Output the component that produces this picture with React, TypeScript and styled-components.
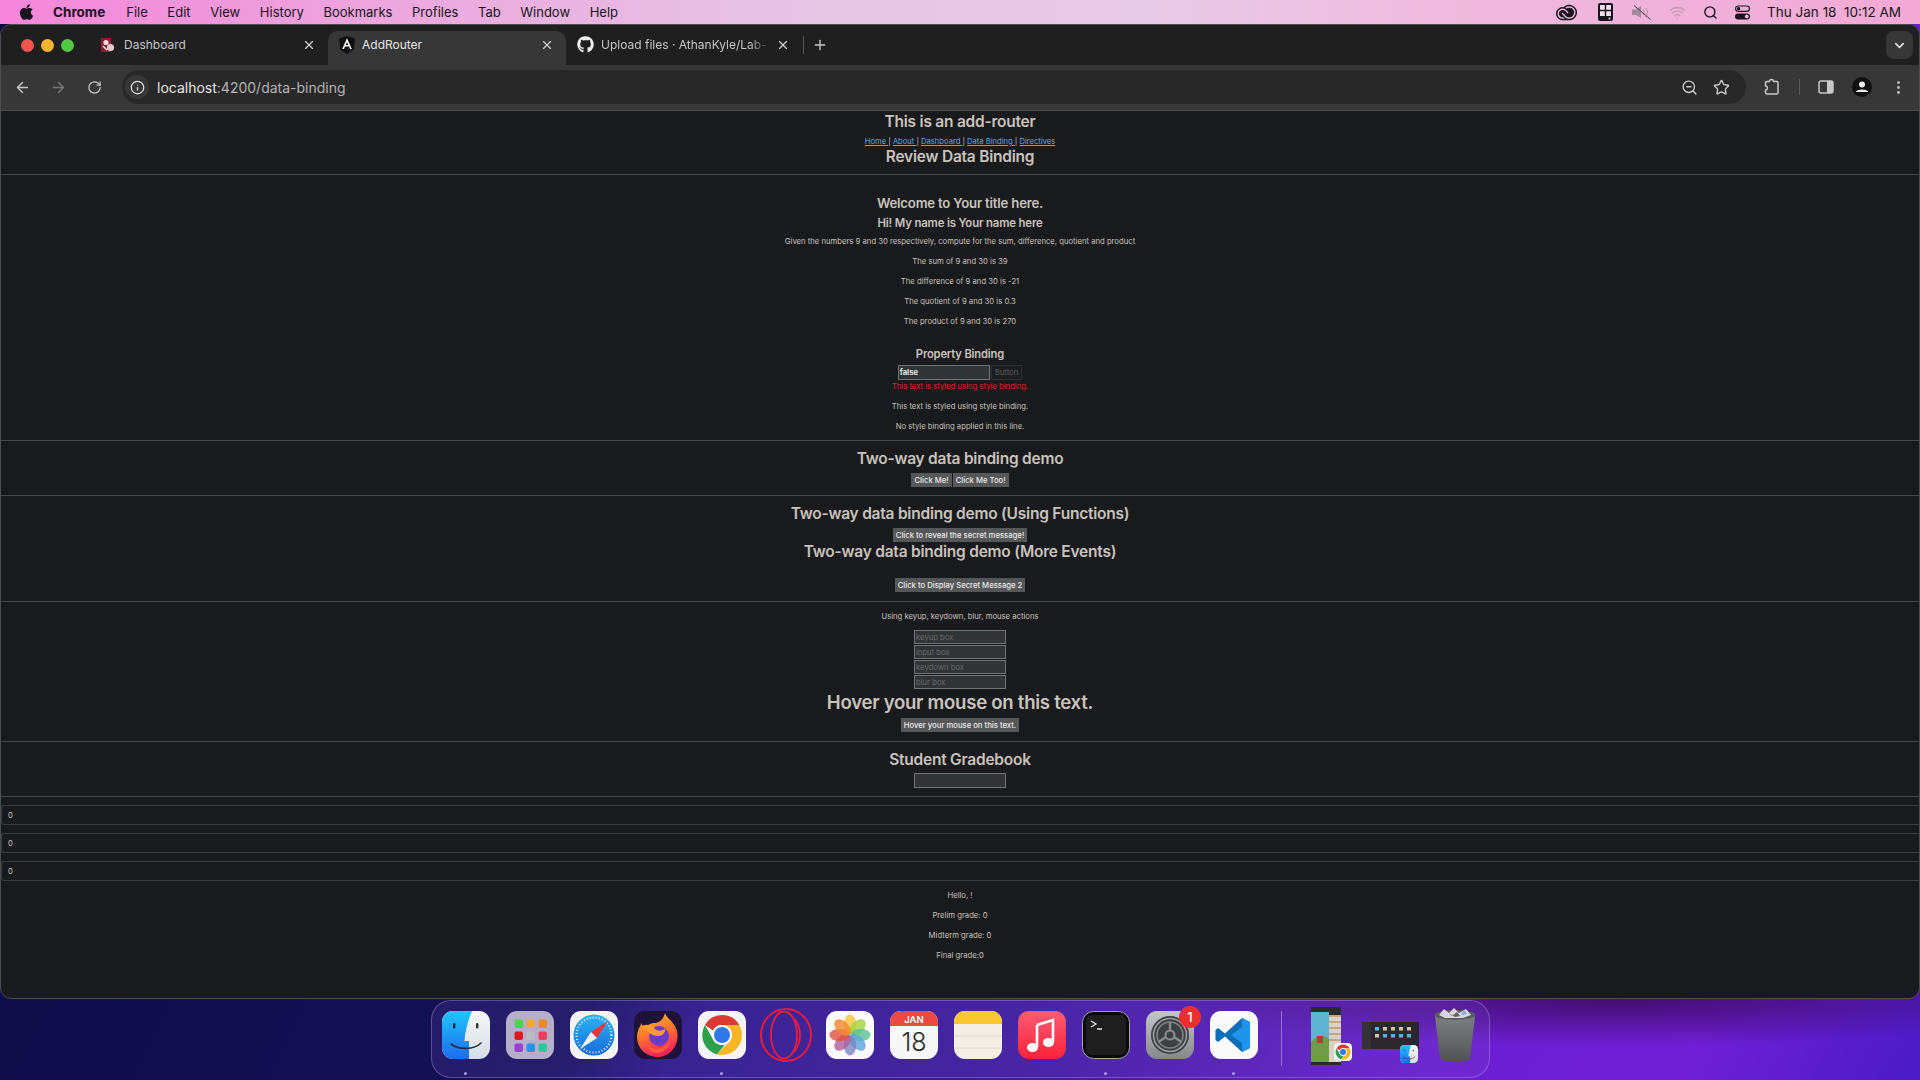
import React from 'react';
import styled, { createGlobalStyle } from 'styled-components';
import { ArrowLeft, ArrowRight, ChevronDown, Info, MoreVertical, Plus, RotateCw, Search, Star, Wifi, X, ZoomOut } from 'lucide-react';
import { FaApple, FaGithub } from 'react-icons/fa';
import { SiAdobecreativecloud } from 'react-icons/si';

const GlobalStyle = createGlobalStyle`
  html, body {
    margin: 0;
    padding: 0;
    background: #100f4a;
  }
  * {
    box-sizing: border-box;
  }
`;

const MENU_ITEMS = ['File', 'Edit', 'View', 'History', 'Bookmarks', 'Profiles', 'Tab', 'Window', 'Help'];

const Desktop = styled.div`
  width: 1920px;
  height: 1080px;
  overflow: hidden;
  display: flex;
  flex-direction: column;
  font-family: Inter, 'Liberation Sans', sans-serif;
  background:
    radial-gradient(ellipse 460px 46px at 1620px 1000px, rgba(62, 12, 100, 0.9), transparent),
    linear-gradient(118deg, #0b0c3e 0%, #141058 45%, #2a1886 49.5%, #3a1a9a 62%, #4f1cb0 70%, #6a1fd0 80%, #701fd6 90%, #4a1cc8 100%);
`;

const MenuBar = styled.div`
  height: 24px;
  flex: none;
  display: flex;
  align-items: center;
  padding: 0 19px 0 18px;
  color: #1a1420;
  font-size: 13px;
  background: linear-gradient(90deg, #f585d9 0%, #ee9fdc 15%, #e6c3e4 40%, #e8cbe6 60%, #efbadd 75%, #f3a9d4 100%);
`;

const AppleMark = styled(FaApple)`
  width: 17px;
  height: 18px;
  margin-right: 18px;
`;

const MenuApp = styled.span`
  font-size: 13.5px;
  font-weight: 700;
  margin-right: 21px;
`;

const MenuItem = styled.span`
  margin-right: 19.6px;
`;

const StatusArea = styled.div`
  margin-left: auto;
  display: flex;
  align-items: center;
`;

const StatusSlot = styled.div<{ $width: number }>`
  width: ${({ $width }) => $width}px;
  display: flex;
  justify-content: center;
  align-items: center;
`;

const Clock = styled.span`
  margin-left: 9px;
  font-size: 13.5px;
  white-space: pre;
`;

const Window = styled.div`
  height: 975px;
  flex: none;
  display: flex;
  flex-direction: column;
  border: 1px solid #4b4d4e;
  border-radius: 11px;
  overflow: hidden;
  background: #181a1b;
`;

const TabStrip = styled.div`
  height: 40px;
  flex: none;
  display: flex;
  align-items: flex-end;
  background: #1f1f1f;
`;

const TrafficLights = styled.div`
  width: 89px;
  height: 40px;
  flex: none;
  padding-left: 20px;
  display: flex;
  align-items: center;
  gap: 7px;
`;

const Light = styled.span<{ $color: string }>`
  width: 13px;
  height: 13px;
  border-radius: 50%;
  background: ${({ $color }) => $color};
`;

const Tab = styled.div<{ $active?: boolean; $width: number }>`
  width: ${({ $width }) => $width}px;
  height: 34px;
  flex: none;
  display: flex;
  align-items: center;
  gap: 7px;
  padding: 0 12px 7px 11px;
  font-size: 12px;
  color: ${({ $active }) => ($active ? '#e6e6e6' : '#c4c4c4')};
  border-radius: 10px 10px 0 0;
  background: ${({ $active }) => ($active ? '#373737' : 'transparent')};
`;

const TabTitle = styled.span<{ $fade?: boolean }>`
  flex: 1;
  overflow: hidden;
  white-space: nowrap;
  ${({ $fade }) =>
    $fade && 'mask-image: linear-gradient(90deg, #000 88%, transparent 100%);'}
`;

const TabClose = styled(X)`
  width: 14px;
  height: 14px;
  flex: none;
  color: #d0d0d0;
`;

const TabDivider = styled.div`
  width: 1px;
  height: 18px;
  margin: 0 0 11px 1px;
  background: #555;
`;

const NewTab = styled(Plus)`
  width: 16px;
  height: 16px;
  margin: 0 0 12px 8px;
  color: #c9c9c9;
`;

const TabSearch = styled.div`
  width: 27px;
  height: 28px;
  margin: 0 6px 6px auto;
  border-radius: 8px;
  display: flex;
  align-items: center;
  justify-content: center;
  color: #e3e3e3;
  background: #373737;
`;

const Toolbar = styled.div`
  height: 46px;
  flex: none;
  display: flex;
  align-items: center;
  padding: 0 12px 1px 3px;
  background: #373737;
  border-bottom: 1px solid #4a4a4a;
`;

const NavButton = styled.div<{ $dim?: boolean }>`
  width: 36px;
  display: flex;
  justify-content: center;
  color: ${({ $dim }) => ($dim ? '#777' : '#c7c7c7')};
`;

const Omnibox = styled.div`
  width: 1624px;
  height: 34px;
  margin-left: 10px;
  display: flex;
  align-items: center;
  padding: 0 16px 0 3px;
  border-radius: 17px;
  background: #282828;
`;

const SiteInfo = styled.div`
  width: 24px;
  height: 24px;
  border-radius: 50%;
  display: flex;
  align-items: center;
  justify-content: center;
  color: #e3e3e3;
  background: #373737;
`;

const Address = styled.span`
  margin-left: 8px;
  font-size: 14px;
  color: #e6e6e6;
`;

const AddressRest = styled.span`
  color: #b4b4b4;
`;

const OmniboxActions = styled.div`
  margin-left: auto;
  display: flex;
  align-items: center;
  gap: 15px;
  color: #c7c7c7;
`;

const ToolbarActions = styled.div`
  margin-left: 17px;
  flex: 1;
  display: flex;
  align-items: center;
  justify-content: space-between;
  color: #c7c7c7;
`;

const ToolbarDivider = styled.div`
  width: 1px;
  height: 16px;
  background: #5a5a5a;
`;

const Content = styled.main`
  flex: 1;
  display: flex;
  flex-direction: column;
  align-items: center;
  color: #c8c3bc;
  font-family: Inter, 'Liberation Sans', sans-serif;
`;

const Heading = styled.h1<{ $size: number; $height: number; $top?: number }>`
  margin: ${({ $top }) => $top ?? 0}px 0 0;
  font-size: ${({ $size }) => $size}px;
  line-height: ${({ $height }) => $height}px;
  font-weight: 600;
  letter-spacing: -0.015em;
  white-space: nowrap;
`;

const NavLinks = styled.nav`
  margin-top: 4px;
  font-size: 7.6px;
  line-height: 12px;
`;

const NavLink = styled.a`
  color: #5fa9ee;
  text-decoration: underline;
`;

const Paragraph = styled.p<{ $top?: number; $red?: boolean }>`
  margin: ${({ $top }) => $top ?? 8}px 0 0;
  padding-top: 2px;
  font-size: 7.7px;
  line-height: 10px;
  white-space: nowrap;
  color: ${({ $red }) => ($red ? '#f0142a' : 'inherit')};
`;

const Rule = styled.hr<{ $top?: number }>`
  width: 100%;
  height: 1px;
  flex: none;
  margin: ${({ $top }) => $top ?? 8}px 0 0;
  border: 0;
  background: #43484a;
`;

const FieldRow = styled.div<{ $top?: number }>`
  margin-top: ${({ $top }) => $top ?? 0}px;
  display: flex;
`;

const FieldStack = styled.div<{ $top?: number }>`
  margin-top: ${({ $top }) => $top ?? 0}px;
  display: flex;
  flex-direction: column;
  gap: 1px;
`;

const TextField = styled.div<{ $bold?: boolean; $height?: number }>`
  width: 92px;
  height: ${({ $height }) => $height ?? 14}px;
  display: flex;
  align-items: center;
  padding-left: 1px;
  font-size: 7.7px;
  font-weight: ${({ $bold }) => ($bold ? 700 : 400)};
  color: ${({ $bold }) => ($bold ? '#e8e6e3' : '#6a6a6a')};
  background: #303436;
  border: 1px solid #6f7679;
`;

const GhostButton = styled.div`
  height: 15px;
  padding: 0 3px;
  margin-left: 1px;
  display: flex;
  align-items: center;
  font-size: 7.7px;
  color: #5c5c5c;
  background: #1c1d1e;
  border: 1px solid #2f3132;
`;

const ActionRow = styled.div<{ $top?: number }>`
  margin-top: ${({ $top }) => $top ?? 0}px;
  display: flex;
  gap: 1px;
`;

const ActionButton = styled.div`
  height: 14px;
  padding: 0 3px;
  display: flex;
  align-items: center;
  font-size: 7.7px;
  font-weight: 500;
  white-space: nowrap;
  color: #eeecea;
  background: #555759;
`;

const GradeRow = styled.div<{ $top?: number }>`
  width: 100%;
  height: 20px;
  flex: none;
  margin-top: ${({ $top }) => $top ?? 8}px;
  display: flex;
  align-items: center;
  padding-left: 6px;
  font-size: 7.7px;
  border: 1px solid #383c3e;
  border-right: 0;
  border-radius: 3px 0 0 3px;
`;

const Dock = styled.div`
  width: 1059px;
  height: 78px;
  flex: none;
  margin: 1px 0 0 431px;
  padding: 10px 0 0 10px;
  display: flex;
  align-items: flex-start;
  border: 1px solid rgba(190, 170, 240, 0.35);
  border-radius: 20px;
  background: rgba(120, 90, 200, 0.18);
`;

const DockSlot = styled.div<{ $dot?: boolean }>`
  position: relative;
  width: 48px;
  height: 48px;
  flex: none;
  margin-right: 16px;

  ${({ $dot }) =>
    $dot &&
    `&::after {
      content: '';
      position: absolute;
      left: 22px;
      top: 61px;
      width: 3px;
      height: 3px;
      border-radius: 50%;
      background: #a99cf0;
    }`}
`;

const DockBadge = styled.span`
  position: absolute;
  top: -5px;
  right: -7px;
  width: 22px;
  height: 22px;
  border-radius: 50%;
  display: flex;
  align-items: center;
  justify-content: center;
  color: #fff;
  font-size: 13px;
  font-weight: 500;
  background: #ee2f2f;
`;

const DockDivider = styled.div`
  width: 1px;
  height: 55px;
  flex: none;
  margin: 0 29px 0 7px;
  background: rgba(210, 190, 245, 0.5);
`;

const Recent = styled.div<{ $width: number; $height: number; $gap: number; $top: number }>`
  position: relative;
  width: ${({ $width }) => $width}px;
  height: ${({ $height }) => $height}px;
  margin-top: ${({ $top }) => $top}px;
  margin-right: ${({ $gap }) => $gap}px;
  flex: none;
`;

const RecentBadge = styled.div<{ $right: number; $bottom: number }>`
  position: absolute;
  right: ${({ $right }) => $right}px;
  bottom: ${({ $bottom }) => $bottom}px;
  width: 18px;
  height: 18px;
`;

const TrashSlot = styled.div`
  margin-top: -4px;
  flex: none;
`;

const OperaMark = styled.svg`
  width: 52px;
  height: 54px;
  margin: -3px -2px;
`;

const FinderIcon = () => (
  <svg viewBox="0 0 48 48" width="100%" height="100%">
    <defs>
      <linearGradient id="finderBlue" x1="0" y1="0" x2="0" y2="1">
        <stop offset="0" stopColor="#1fc6fb" />
        <stop offset="1" stopColor="#1c6cf0" />
      </linearGradient>
      <linearGradient id="finderLight" x1="0" y1="0" x2="0" y2="1">
        <stop offset="0" stopColor="#f7f7f7" />
        <stop offset="1" stopColor="#d4dde6" />
      </linearGradient>
    </defs>
    <rect width="48" height="48" rx="11" fill="url(#finderLight)" />
    <path d="M11 0H30C26 10 23 20 22.5 30H27V48H11A11 11 0 0 1 0 37V11A11 11 0 0 1 11 0Z" fill="url(#finderBlue)" />
    <rect x="11" y="12" width="2.4" height="5.5" rx="1.2" fill="#1a2a44" />
    <rect x="34" y="12" width="2.4" height="5.5" rx="1.2" fill="#333" />
    <path d="M9 33C17 39 32 39 39 32" stroke="#26303c" strokeWidth="1.6" fill="none" strokeLinecap="round" />
  </svg>
);

const LaunchpadIcon = () => {
  const colors = ['#4ed34a', '#f2aa32', '#f08a24', '#e1191f', '#b9bcc4', '#ef3b5c', '#9a3fd0', '#2393ef', '#2ac9a0'];
  return (
    <svg viewBox="0 0 48 48" width="100%" height="100%">
      <rect width="48" height="48" rx="11" fill="#b5afc9" />
      {colors.map((color, i) => (
        <rect key={color} x={8.5 + (i % 3) * 12} y={8.5 + Math.floor(i / 3) * 12} width="8.5" height="8.5" rx="2" fill={color} />
      ))}
    </svg>
  );
};

const SafariIcon = () => (
  <svg viewBox="0 0 48 48" width="100%" height="100%">
    <defs>
      <linearGradient id="safariBlue" x1="0" y1="0" x2="0" y2="1">
        <stop offset="0" stopColor="#29b5f5" />
        <stop offset="1" stopColor="#1a6ad8" />
      </linearGradient>
    </defs>
    <rect width="48" height="48" rx="11" fill="#f4f4f4" />
    <circle cx="24" cy="24" r="20.5" fill="url(#safariBlue)" />
    <circle cx="24" cy="24" r="17.5" fill="none" stroke="#fff" strokeWidth="2.2" strokeDasharray="1 2.1" opacity="0.85" />
    <path d="M38 10L21 21L27 27Z" fill="#f0343c" />
    <path d="M10 38L21 21L27 27Z" fill="#f2f2f2" />
  </svg>
);

const FirefoxIcon = () => (
  <svg viewBox="0 0 48 48" width="100%" height="100%">
    <defs>
      <linearGradient id="foxFlame" x1="0" y1="0" x2="0.3" y2="1">
        <stop offset="0" stopColor="#ffc02e" />
        <stop offset="0.5" stopColor="#ff7a28" />
        <stop offset="1" stopColor="#f0245a" />
      </linearGradient>
    </defs>
    <rect width="48" height="48" rx="11" fill="#1f1238" />
    <path d="M31 2C33 8 40 10 43 20C46 34 36 46 24 46C12 46 3 37 3 26C3 21 5 16 8 12C8 16 9 17 11 18C13 14 17 12 20 12C24 12 29 10 31 2Z" fill="url(#foxFlame)" />
    <circle cx="25" cy="25" r="10" fill="#6a3bc8" />
    <path d="M6 16C12 12 18 14 21 18C24 21 30 20 31 17C32 22 28 25 24 25C18 25 15 21 6 16Z" fill="#ff9a2e" />
    <path d="M13 33C20 42 34 38 36 27C37 38 27 43 21 42C17 41 14 37 13 33Z" fill="#ff5a3c" />
  </svg>
);

const ChromeIcon = () => (
  <svg viewBox="0 0 48 48" width="100%" height="100%">
    <rect width="48" height="48" rx="11" fill="#f4f4f6" />
    <path d="M24 4A20 20 0 0 1 41.3 14H24A10 10 0 0 0 15 19.6L7 14A20 20 0 0 1 24 4Z" fill="#db3a30" />
    <path d="M7 14L15.3 29A10 10 0 0 0 27 33.5L19 43.4A20 20 0 0 1 7 14Z" fill="#2da14a" />
    <path d="M41.3 14A20 20 0 0 1 24 44L19 43.4L32.6 29A10 10 0 0 0 24 14Z" fill="#f9b526" />
    <circle cx="24" cy="24" r="10" fill="#fff" />
    <circle cx="24" cy="24" r="8" fill="#2f78e6" />
  </svg>
);

const OperaIcon = () => (
  <OperaMark viewBox="0 0 52 54">
    <ellipse cx="26" cy="27" rx="25" ry="26" fill="none" stroke="#ee1c3a" strokeWidth="2" />
    <ellipse cx="24" cy="27" rx="13" ry="23.5" fill="none" stroke="#ee1c3a" strokeWidth="1.8" />
    <path d="M34 10C42 20 42 34 34 44" fill="none" stroke="#ee1c3a" strokeWidth="1.8" />
  </OperaMark>
);

const PhotosIcon = () => {
  const petals = ['#f6c63a', '#a6d23e', '#5fc08e', '#5aa8dc', '#7f83c6', '#b25f9e', '#e2503e', '#f08a2e'];
  return (
    <svg viewBox="0 0 48 48" width="100%" height="100%">
      <rect width="48" height="48" rx="11" fill="#fafafa" />
      {petals.map((color, i) => (
        <ellipse key={color} cx="24" cy="13.5" rx="6.2" ry="10" fill={color} opacity="0.8" transform={`rotate(${i * 45} 24 24)`} />
      ))}
    </svg>
  );
};

const CalendarIcon = () => (
  <svg viewBox="0 0 48 48" width="100%" height="100%">
    <rect width="48" height="48" rx="11" fill="#f7f7f7" />
    <path d="M11 0H37A11 11 0 0 1 48 11V15H0V11A11 11 0 0 1 11 0Z" fill="#ea4a42" />
    <text x="24" y="11.5" textAnchor="middle" fontFamily="Inter" fontWeight="600" fontSize="9.5" fill="#fff">JAN</text>
    <text x="24" y="40" textAnchor="middle" fontFamily="Inter" fontWeight="300" fontSize="25" fill="#2b2b2b">18</text>
  </svg>
);

const NotesIcon = () => (
  <svg viewBox="0 0 48 48" width="100%" height="100%">
    <rect width="48" height="48" rx="11" fill="#f3efe5" />
    <path d="M11 0H37A11 11 0 0 1 48 11V13H0V11A11 11 0 0 1 11 0Z" fill="#fbc833" />
    <path d="M0 25H48M0 37H48" stroke="#d9d5cb" strokeWidth="0.8" />
  </svg>
);

const MusicIcon = () => (
  <svg viewBox="0 0 48 48" width="100%" height="100%">
    <defs>
      <linearGradient id="musicRed" x1="0" y1="0" x2="0" y2="1">
        <stop offset="0" stopColor="#fb5c74" />
        <stop offset="1" stopColor="#fa233b" />
      </linearGradient>
    </defs>
    <rect width="48" height="48" rx="11" fill="url(#musicRed)" />
    <path d="M19 14L35 9V31" stroke="#fff" strokeWidth="2.6" fill="none" />
    <path d="M19 14V36" stroke="#fff" strokeWidth="2.6" fill="none" />
    <ellipse cx="14.5" cy="36.5" rx="5.5" ry="4.5" fill="#fff" />
    <ellipse cx="30.5" cy="31.5" rx="5.5" ry="4.5" fill="#fff" />
  </svg>
);

const TerminalIcon = () => (
  <svg viewBox="0 0 48 48" width="100%" height="100%">
    <rect x="0.5" y="0.5" width="47" height="47" rx="11" fill="#0a0a0a" stroke="#a3a3a8" />
    <rect x="4" y="4" width="40" height="40" rx="6" fill="#1e1e1e" />
    <path d="M9 10L14 13L9 16M15 18H20" stroke="#e8e8e8" strokeWidth="1.3" fill="none" />
  </svg>
);

const SettingsIcon = () => (
  <svg viewBox="0 0 48 48" width="100%" height="100%">
    <defs>
      <linearGradient id="gearBack" x1="0" y1="0" x2="0" y2="1">
        <stop offset="0" stopColor="#c3c6cb" />
        <stop offset="1" stopColor="#85878b" />
      </linearGradient>
    </defs>
    <rect width="48" height="48" rx="11" fill="url(#gearBack)" />
    <circle cx="24" cy="24" r="19" fill="#3e3f42" />
    <circle cx="24" cy="24" r="16.5" fill="none" stroke="#9a9c9f" strokeWidth="1.6" />
    <circle cx="24" cy="24" r="13" fill="none" stroke="#808285" strokeWidth="1.6" />
    <circle cx="24" cy="24" r="4.5" fill="none" stroke="#8a8c8f" strokeWidth="2" />
    <path d="M24 19.5V11M20 26L12.5 31M28 26L35.5 31" stroke="#8a8c8f" strokeWidth="2.4" />
  </svg>
);

const VSCodeIcon = () => (
  <svg viewBox="0 0 48 48" width="100%" height="100%">
    <rect width="48" height="48" rx="11" fill="#fafafa" />
    <path d="M32 7L40 11V37L32 41L15 25.5L8 31L5.5 29V19L8 17L15 22.5Z" fill="#0a6fb8" />
    <path d="M32 7L40 11V37L32 41V32L21 24L32 16Z" fill="#1f94e8" />
  </svg>
);

const TrashIcon = () => (
  <svg viewBox="0 0 44 56" width="44" height="56">
    <defs>
      <linearGradient id="binGrey" x1="0" y1="0" x2="0" y2="1">
        <stop offset="0" stopColor="#7d7f82" />
        <stop offset="1" stopColor="#505255" />
      </linearGradient>
    </defs>
    <path d="M2 9L7 52C8 55 36 55 37 52L42 9Z" fill="url(#binGrey)" />
    <ellipse cx="22" cy="8" rx="20.5" ry="5" fill="#5a5c60" />
    <path d="M6 8L11 2L16 6L21 1L26 6L33 2L38 8L30 11H12Z" fill="#d8d6d8" />
    <path d="M16 6L19 9L24 5L27 9L22 10Z" fill="#65615f" />
    <path d="M31 3L34 7L28 8Z" fill="#7bb0c8" />
  </svg>
);

const ChromeThumb = () => (
  <svg viewBox="0 0 30 58" width="30" height="58">
    <rect width="30" height="58" fill="#2c2a2a" />
    <rect y="5" width="18" height="50" fill="#5eb4d3" />
    <path d="M0 36C6 26 12 28 18 32V55H0Z" fill="#6f9c46" />
    <path d="M6 29H12V36H6Z" fill="#b0402e" />
    <rect x="18" y="8" width="12" height="47" fill="#d9d2c4" />
    <path d="M18 9H30M18 15H30M18 21H30M18 27H30M18 33H30" stroke="#b27a45" strokeWidth="1" />
  </svg>
);

const FinderThumb = () => {
  const tiles = [
    [13, 5, '#4fb5ea'], [21, 5, '#d6c3ae'], [29, 5, '#d6c3ae'], [37, 5, '#d6c3ae'], [45, 5, '#d6c3ae'],
    [13, 12, '#d6c3ae'], [21, 12, '#4fb5ea'], [29, 12, '#4fb5ea'], [37, 12, '#4fb5ea'], [45, 12, '#4fb5ea'],
  ] as const;
  return (
    <svg viewBox="0 0 57 27" width="57" height="27">
      <rect width="57" height="27" fill="#2a282c" />
      <rect width="9" height="27" fill="#343236" />
      {tiles.map(([x, y, color]) => (
        <rect key={`${x}-${y}`} x={x} y={y} width="4" height="3.5" fill={color} />
      ))}
    </svg>
  );
};

const ExtensionIcon = () => (
  <svg width="18" height="18" viewBox="0 0 18 18" fill="none" stroke="#c7c7c7" strokeWidth="1.5" strokeLinejoin="round">
    <path d="M3.5 3.5H6.5C6.5 0.8 10.5 0.8 10.5 3.5H14A1 1 0 0 1 15 4.5V14.5A1.5 1.5 0 0 1 13.5 16H4A1.5 1.5 0 0 1 2.5 14.5V12C5 12 5 8 2.5 8V4.5A1 1 0 0 1 3.5 3.5Z" />
  </svg>
);

const SidePanelIcon = () => (
  <svg width="16" height="16" viewBox="0 0 16 16">
    <rect x="1" y="2" width="14" height="12" rx="2" fill="none" stroke="#c7c7c7" strokeWidth="1.5" />
    <path d="M9 2H13A2 2 0 0 1 15 4V12A2 2 0 0 1 13 14H9Z" fill="#c7c7c7" />
  </svg>
);

const AvatarIcon = () => (
  <svg width="20" height="20" viewBox="0 0 20 20">
    <circle cx="10" cy="10" r="10" fill="#111" />
    <circle cx="10" cy="7.6" r="3" fill="#eee" />
    <path d="M4 14.5C5 11.8 15 11.8 16 14.5V15H4Z" fill="#eee" />
  </svg>
);

const AngularFavicon = () => (
  <svg width="16" height="18" viewBox="0 0 16 18" style={{ flex: 'none' }}>
    <path d="M8 0L16 2.8L14.8 13.6L8 18L1.2 13.6L0 2.8Z" fill="#0f0f12" />
    <path d="M8 2.2L3.2 13H5L6 10.6H10L11 13H12.8ZM6.8 9L8 6L9.2 9Z" fill="#fff" />
  </svg>
);

const DashboardFavicon = () => (
  <svg width="14" height="14" viewBox="0 0 14 14" style={{ flex: 'none', marginRight: 2 }}>
    <rect width="10" height="14" fill="#8f1a33" />
    <circle cx="5" cy="4.5" r="2.6" fill="#f2dfe2" />
    <circle cx="9.5" cy="9.5" r="3.6" fill="#e8c9cf" />
    <path d="M2 8L6 12" stroke="#f2dfe2" strokeWidth="1.6" />
  </svg>
);

const GridBoxIcon = () => (
  <svg width="15" height="18" viewBox="0 0 15 18">
    <rect width="15" height="18" rx="2" fill="#1a1420" />
    <rect x="2" y="2" width="11" height="11" fill="#f0e0ec" />
    <path d="M7.5 2V13M2 7.5H13" stroke="#1a1420" strokeWidth="1.4" />
    <circle cx="11.5" cy="15.5" r="1" fill="#f0e0ec" />
  </svg>
);

const MutedSpeakerIcon = () => (
  <svg width="19" height="15" viewBox="0 0 19 15">
    <path d="M0 4.5H4L9 1V13L4 10H0Z" fill="#a48a9e" />
    <path d="M11 4.5C12.5 6 12.5 8.5 11 10M13.5 3C16 5.5 16 9 13.5 12" fill="none" stroke="#a48a9e" strokeWidth="1" />
    <path d="M2 0.5L18.5 14.5" stroke="#4f3f4d" strokeWidth="1" />
  </svg>
);

const ControlCenterIcon = () => (
  <svg width="15" height="15" viewBox="0 0 15 15">
    <rect x="0.6" y="1" width="13.8" height="5.4" rx="2.7" fill="none" stroke="#1a1420" strokeWidth="1.1" />
    <circle cx="3.6" cy="3.7" r="1.7" fill="#1a1420" />
    <rect y="8.4" width="15" height="6" rx="3" fill="#1a1420" />
    <circle cx="11.8" cy="11.4" r="1.9" fill="#f0b5d8" />
  </svg>
);

const App: React.FC = () => {
  return (
    <Desktop>
      <GlobalStyle />
      <MenuBar>
        <AppleMark />
        <MenuApp>Chrome</MenuApp>
        {MENU_ITEMS.map((item) => (
          <MenuItem key={item}>{item}</MenuItem>
        ))}
        <StatusArea>
          <StatusSlot $width={44}>
            <SiAdobecreativecloud size={21} />
          </StatusSlot>
          <StatusSlot $width={34}>
            <GridBoxIcon />
          </StatusSlot>
          <StatusSlot $width={38}>
            <MutedSpeakerIcon />
          </StatusSlot>
          <StatusSlot $width={34}>
            <Wifi size={17} color="#bd9cb4" />
          </StatusSlot>
          <StatusSlot $width={32}>
            <Search size={15} strokeWidth={2.2} />
          </StatusSlot>
          <StatusSlot $width={32}>
            <ControlCenterIcon />
          </StatusSlot>
          <Clock>Thu Jan 18  10:12 AM</Clock>
        </StatusArea>
      </MenuBar>

      <Window>
        <TabStrip>
          <TrafficLights>
            <Light $color="#f2544d" />
            <Light $color="#f5b32f" />
            <Light $color="#4fc842" />
          </TrafficLights>
          <Tab $width={238}>
            <DashboardFavicon />
            <TabTitle>Dashboard</TabTitle>
            <TabClose />
          </Tab>
          <Tab $active $width={238}>
            <AngularFavicon />
            <TabTitle>AddRouter</TabTitle>
            <TabClose />
          </Tab>
          <Tab $width={236}>
            <FaGithub size={17} color="#eee" style={{ flex: 'none' }} />
            <TabTitle $fade>Upload files · AthanKyle/Lab-</TabTitle>
            <TabClose />
          </Tab>
          <TabDivider />
          <NewTab />
          <TabSearch>
            <ChevronDown size={15} strokeWidth={2.5} />
          </TabSearch>
        </TabStrip>

        <Toolbar>
          <NavButton>
            <ArrowLeft size={17} />
          </NavButton>
          <NavButton $dim>
            <ArrowRight size={17} />
          </NavButton>
          <NavButton>
            <RotateCw size={15} />
          </NavButton>
          <Omnibox>
            <SiteInfo>
              <Info size={15} />
            </SiteInfo>
            <Address>
              localhost<AddressRest>:4200/data-binding</AddressRest>
            </Address>
            <OmniboxActions>
              <ZoomOut size={17} />
              <Star size={17} />
            </OmniboxActions>
          </Omnibox>
          <ToolbarActions>
            <ExtensionIcon />
            <ToolbarDivider />
            <SidePanelIcon />
            <AvatarIcon />
            <MoreVertical size={17} />
          </ToolbarActions>
        </Toolbar>

        <Content>
          <Heading $size={15.5} $height={20} $top={1}>This is an add-router</Heading>
          <NavLinks>
            <NavLink>Home </NavLink>| <NavLink>About </NavLink>| <NavLink>Dashboard </NavLink>|{' '}
            <NavLink>Data Binding </NavLink>| <NavLink>Directives</NavLink>
          </NavLinks>
          <Heading $size={15.5} $height={18}>Review Data Binding</Heading>
          <Rule />

          <Heading $size={13.2} $height={18} $top={19}>Welcome to Your title here.</Heading>
          <Heading $size={11.4} $height={16} $top={3}>Hi! My name is Your name here</Heading>
          <Paragraph $top={4}>Given the numbers 9 and 30 respectively, compute for the sum, difference, quotient and product</Paragraph>
          <Paragraph>The sum of 9 and 30 is 39</Paragraph>
          <Paragraph>The difference of 9 and 30 is -21</Paragraph>
          <Paragraph>The quotient of 9 and 30 is 0.3</Paragraph>
          <Paragraph>The product of 9 and 30 is 270</Paragraph>
          <Heading $size={11.2} $height={18} $top={18}>Property Binding</Heading>
          <FieldRow $top={2}>
            <TextField $bold $height={15}>false</TextField>
            <GhostButton>Button</GhostButton>
          </FieldRow>
          <Paragraph $red $top={0}>This text is styled using style binding.</Paragraph>
          <Paragraph>This text is styled using style binding.</Paragraph>
          <Paragraph>No style binding applied in this line.</Paragraph>
          <Rule />

          <Heading $size={15.5} $height={18} $top={9}>Two-way data binding demo</Heading>
          <ActionRow $top={5}>
            <ActionButton>Click Me!</ActionButton>
            <ActionButton>Click Me Too!</ActionButton>
          </ActionRow>
          <Rule />

          <Heading $size={15.5} $height={18} $top={9}>Two-way data binding demo (Using Functions)</Heading>
          <ActionRow $top={5}>
            <ActionButton>Click to reveal the secret message!</ActionButton>
          </ActionRow>
          <Heading $size={15.5} $height={18} $top={1}>Two-way data binding demo (More Events)</Heading>
          <ActionRow $top={17}>
            <ActionButton>Click to Display Secret Message 2</ActionButton>
          </ActionRow>
          <Rule $top={9} />

          <Paragraph>Using keyup, keydown, blur, mouse actions</Paragraph>
          <FieldStack $top={8}>
            <TextField>keyup box</TextField>
            <TextField>input box</TextField>
            <TextField>keydown box</TextField>
            <TextField>blur box</TextField>
          </FieldStack>
          <Heading $size={18.6} $height={24} $top={1}>Hover your mouse on this text.</Heading>
          <ActionRow $top={4}>
            <ActionButton>Hover your mouse on this text.</ActionButton>
          </ActionRow>
          <Rule $top={9} />

          <Heading $size={15.5} $height={18} $top={9}>Student Gradebook</Heading>
          <FieldRow $top={4}>
            <TextField $height={15} />
          </FieldRow>
          <Rule />

          <GradeRow>0</GradeRow>
          <GradeRow>0</GradeRow>
          <GradeRow>0</GradeRow>
          <Paragraph>Hello, !</Paragraph>
          <Paragraph>Prelim grade: 0</Paragraph>
          <Paragraph>Midterm grade: 0</Paragraph>
          <Paragraph>Final grade:0</Paragraph>
        </Content>
      </Window>

      <Dock>
        <DockSlot $dot><FinderIcon /></DockSlot>
        <DockSlot><LaunchpadIcon /></DockSlot>
        <DockSlot><SafariIcon /></DockSlot>
        <DockSlot><FirefoxIcon /></DockSlot>
        <DockSlot $dot><ChromeIcon /></DockSlot>
        <DockSlot><OperaIcon /></DockSlot>
        <DockSlot><PhotosIcon /></DockSlot>
        <DockSlot><CalendarIcon /></DockSlot>
        <DockSlot><NotesIcon /></DockSlot>
        <DockSlot><MusicIcon /></DockSlot>
        <DockSlot $dot><TerminalIcon /></DockSlot>
        <DockSlot>
          <SettingsIcon />
          <DockBadge>1</DockBadge>
        </DockSlot>
        <DockSlot $dot><VSCodeIcon /></DockSlot>
        <DockDivider />
        <Recent $width={30} $height={58} $gap={21} $top={-4}>
          <ChromeThumb />
          <RecentBadge $right={-11} $bottom={4}><ChromeIcon /></RecentBadge>
        </Recent>
        <Recent $width={57} $height={27} $gap={14} $top={11}>
          <FinderThumb />
          <RecentBadge $right={1} $bottom={-14}><FinderIcon /></RecentBadge>
        </Recent>
        <TrashSlot>
          <TrashIcon />
        </TrashSlot>
      </Dock>
    </Desktop>
  );
};

export default App;
